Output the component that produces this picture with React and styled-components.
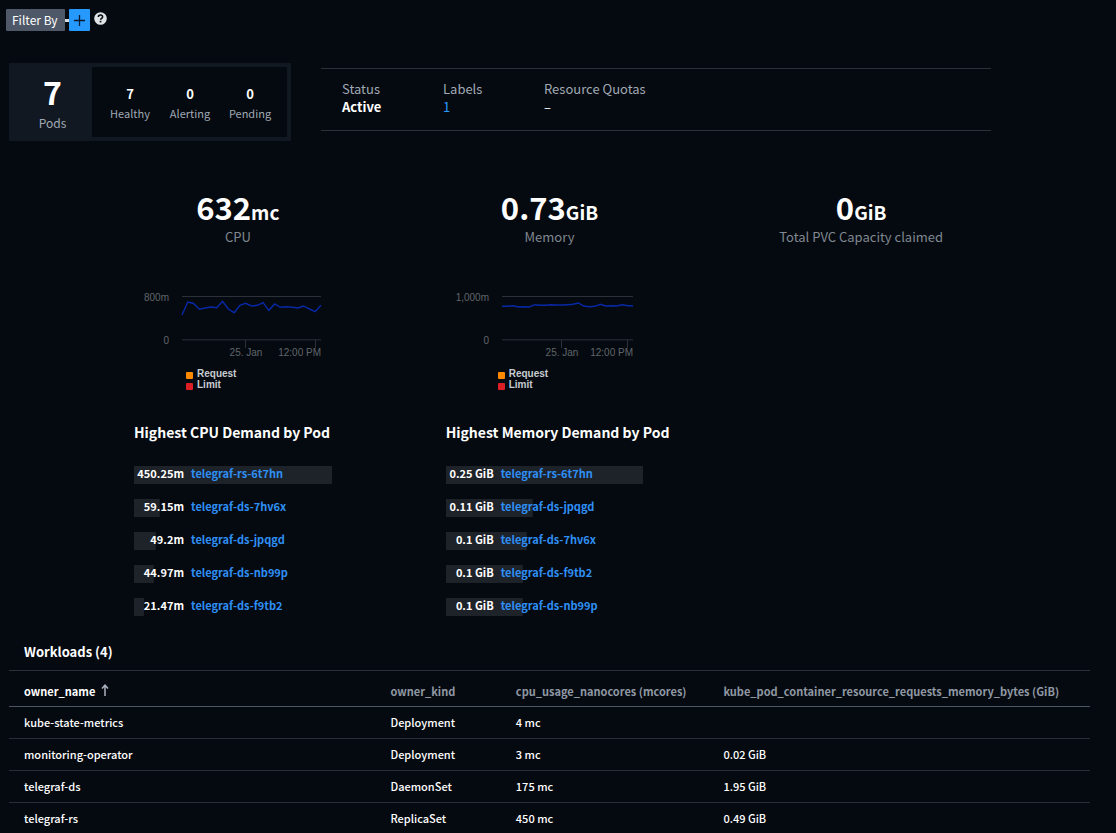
import React from "react";
import styled, { createGlobalStyle } from "styled-components";

const Global = createGlobalStyle`
  * { box-sizing: border-box; }
  body {
    margin: 0;
    background: #050a10;
    color: #fff;
    font-family: "Noto Sans CJK JP", "Noto Sans", sans-serif;
    font-size: 12px;
    line-height: 20px;
  }
  a { text-decoration: none; }
`;

const Page = styled.main`
  padding: 9px 26px 0 9px;
`;

const FilterBar = styled.div`
  display: flex;
  align-items: center;
  height: 22px;
  margin-left: -3px;
`;

const FilterButton = styled.button`
  height: 22px;
  padding: 0 7px 1px 6px;
  border: 0;
  border-radius: 1px;
  background: #4f5868;
  color: #fff;
  font: inherit;
  line-height: 20px;
`;

const Connector = styled.span`
  width: 4px;
  height: 3px;
  background: #d5dbe1;
`;

const AddButton = styled.button`
  display: grid;
  place-items: center;
  width: 21px;
  height: 22px;
  padding: 0;
  border: 0;
  border-radius: 1px;
  background: #2699ff;
`;

const HelpButton = styled.button`
  display: grid;
  width: 13px;
  height: 16px;
  margin-left: 4px;
  padding: 0;
  border: 0;
  background: none;
`;

const Summary = styled.section`
  display: flex;
  align-items: flex-start;
  gap: 30px;
  margin-top: 32px;
`;

const PodCard = styled.div`
  display: flex;
  height: 78px;
  padding: 4px;
  background: #111821;
`;

const PodTotal = styled.div`
  width: 79px;
  padding-top: 4px;
  text-align: center;
`;

const TotalNumber = styled.div`
  margin-bottom: 2px;
  font-size: 32px;
  line-height: 40px;
  font-weight: 700;
`;

const Muted = styled.div`
  color: #a0a9b4;
  font-size: ${(p) => (p.$small ? 11 : 12)}px;
`;

const PodStates = styled.div`
  display: grid;
  grid-template-columns: repeat(3, 60px);
  width: 195px;
  padding: 18px 7px 0 8px;
  background: #050a10;
  text-align: center;
`;

const StateCount = styled.div`
  font-size: 13px;
  line-height: 18px;
  font-weight: 700;
`;

const Facts = styled.dl`
  display: flex;
  width: 62%;
  height: 63px;
  margin: 5px 0 0;
  padding: 11px 21px;
  border-top: 1px solid #2b3138;
  border-bottom: 1px solid #2b3138;
  font-size: 13px;
  line-height: 18px;
`;

const Fact = styled.div`
  min-width: 101px;
  dt { color: #a0a9b4; }
  dd { margin: 0; font-weight: ${(p) => (p.$strong ? 700 : 400)}; }
  a { color: #2699ff; }
`;

const Metrics = styled.section`
  display: grid;
  grid-template-columns: repeat(3, minmax(0, 1fr));
  margin-top: 46px;
  padding: 0 73px;
`;

const Headline = styled.div`
  text-align: center;
  color: #808890;
  font-size: 13px;
`;

const Amount = styled.div`
  color: #fff;
  font-size: 31px;
  line-height: 40px;
  font-weight: 700;
`;

const Unit = styled.span`
  font-size: 19px;
  line-height: 20px;
`;

const MetricBody = styled.div`
  padding: 38px 62px 0 52px;
`;

const ChartSvg = styled.svg`
  display: block;
  overflow: visible;
  font: 10px "Liberation Sans", sans-serif;
`;

const Legend = styled.ul`
  margin: 7px 0 0 52px;
  padding: 0;
  list-style: none;
  color: #c8ccd0;
  font: 700 10px/11px "Liberation Sans", sans-serif;
`;

const LegendItem = styled.li`
  display: flex;
  align-items: flex-end;
  gap: 4px;
  &::before {
    content: "";
    width: 7px;
    height: 7px;
    border-radius: 1px;
    background: ${(p) => p.$color};
  }
`;

const ListTitle = styled.h2`
  margin: 32px 0 24px;
  font-size: 14px;
  line-height: 20px;
  font-weight: 700;
  white-space: nowrap;
`;

const PodList = styled.ul`
  display: grid;
  gap: 15px;
  margin: 0;
  padding: 0;
  list-style: none;
`;

const PodRow = styled.li`
  display: flex;
  gap: 7px;
  height: 18px;
  font-size: 11px;
  line-height: 15px;
  font-weight: 700;
  white-space: nowrap;
  background: linear-gradient(#1e2329, #1e2329) no-repeat 0 0 / ${(p) => p.$share}% 100%;
  a { color: #2f8ff5; }
`;

const PodValue = styled.span`
  width: ${(p) => p.$width}px;
  text-align: right;
`;

const TableTitle = styled.h2`
  margin: 26px 15px 8px;
  font-size: 13px;
  line-height: 20px;
  font-weight: 700;
`;

const Table = styled.table`
  width: 100%;
  border-top: 1px solid #2b3138;
  border-collapse: separate;
  border-spacing: 0;
  table-layout: fixed;
`;

const Th = styled.th`
  height: 36px;
  width: ${(p) => p.$width};
  padding: 5px 0 0 15px;
  border-bottom: 1px solid #4b5563;
  color: ${(p) => (p.$sorted ? "#fff" : "#8f98a3")};
  font-size: 11px;
  font-weight: 700;
  text-align: left;
  white-space: nowrap;
  svg { margin-left: 6px; }
`;

const Td = styled.td`
  height: 32px;
  padding: 0 0 2px 15px;
  border-bottom: 1px solid #272d37;
  font-size: 11px;
  font-weight: 500;
`;

const states = [
  ["7", "Healthy"],
  ["0", "Alerting"],
  ["0", "Pending"],
];

const cpu = {
  max: "800m",
  left: 48,
  ticks: [111, 181],
  points: [30, 17, 18.5, 24.3, 23, 22, 22.7, 16.3, 24, 27.7, 20.3, 18.3, 21, 20.3, 17.7, 25.3, 19, 22.3, 21.7, 22.3, 23, 21, 24, 26.7, 20.3],
  title: "Highest CPU Demand by Pod",
  valueWidth: 50,
  pods: [
    ["450.25m", "telegraf-rs-6t7hn", 100],
    ["59.15m", "telegraf-ds-7hv6x", 13],
    ["49.2m", "telegraf-ds-jpqgd", 11],
    ["44.97m", "telegraf-ds-nb99p", 10],
    ["21.47m", "telegraf-ds-f9tb2", 5],
  ],
};

const memory = {
  max: "1,000m",
  left: 56,
  ticks: [115, 181],
  points: [21.3, 21.3, 20.7, 22, 21.7, 22, 19.7, 20.3, 20.3, 19.7, 20, 20, 19.7, 19.3, 18, 21, 21.7, 21.3, 19.3, 21, 20.7, 21, 19.7, 20.7, 20.7],
  title: "Highest Memory Demand by Pod",
  valueWidth: 48,
  pods: [
    ["0.25 GiB", "telegraf-rs-6t7hn", 100],
    ["0.11 GiB", "telegraf-ds-jpqgd", 44],
    ["0.1 GiB", "telegraf-ds-7hv6x", 41],
    ["0.1 GiB", "telegraf-ds-f9tb2", 39],
    ["0.1 GiB", "telegraf-ds-nb99p", 39],
  ],
};

const metrics = [
  { amount: "632", unit: "mc", label: "CPU", detail: cpu },
  { amount: "0.73", unit: "GiB", label: "Memory", detail: memory },
  { amount: "0", unit: "GiB", label: "Total PVC Capacity claimed" },
];

const workloads = [
  ["kube-state-metrics", "Deployment", "4 mc", ""],
  ["monitoring-operator", "Deployment", "3 mc", "0.02 GiB"],
  ["telegraf-ds", "DaemonSet", "175 mc", "1.95 GiB"],
  ["telegraf-rs", "ReplicaSet", "450 mc", "0.49 GiB"],
];

function Chart({ data }) {
  const right = 187;
  const step = (right - data.left) / (data.points.length - 1);
  const line = data.points.map((y, i) => `${data.left + i * step},${y}`).join(" ");
  return (
    <ChartSvg width="198" height="76" viewBox="0 0 198 76">
      <g stroke="#2b3039">
        <path d={`M${data.left} 11.5H${right}`} />
        <path d={`M${data.left} 54.8H${right}`} />
        {data.ticks.map((x) => (
          <path key={x} d={`M${x + 0.5} 55V63`} />
        ))}
      </g>
      <polyline points={line} fill="none" stroke="#0728a8" strokeWidth="1.4" />
      <g fill="#60656a">
        <text x={data.left - 13} y="16" textAnchor="end">{data.max}</text>
        <text x={data.left - 13} y="59" textAnchor="end">0</text>
        <text x={data.ticks[0] + 1} y="71" textAnchor="middle">25. Jan</text>
        <text x={right} y="71" textAnchor="end">12:00 PM</text>
      </g>
    </ChartSvg>
  );
}

function MetricDetail({ data }) {
  return (
    <MetricBody>
      <Chart data={data} />
      <Legend>
        <LegendItem $color="#ff8a00">Request</LegendItem>
        <LegendItem $color="#dc1f24">Limit</LegendItem>
      </Legend>
      <ListTitle>{data.title}</ListTitle>
      <PodList>
        {data.pods.map(([value, name, share]) => (
          <PodRow key={name} $share={share}>
            <PodValue $width={data.valueWidth}>{value}</PodValue>
            <a href="#pod">{name}</a>
          </PodRow>
        ))}
      </PodList>
    </MetricBody>
  );
}

export default function App() {
  return (
    <Page>
      <Global />
      <FilterBar>
        <FilterButton type="button">Filter By</FilterButton>
        <Connector />
        <AddButton type="button" aria-label="Add filter">
          <svg width="11" height="11" viewBox="0 0 11 11">
            <path d="M5.5 0V11M0 5.5H11" stroke="#0b1a2c" strokeWidth="1.3" />
          </svg>
        </AddButton>
        <HelpButton type="button" aria-label="Help">
          <svg width="13" height="13" viewBox="0 0 13 13">
            <circle cx="6.5" cy="6.5" r="6.3" fill="#dfe3e6" />
            <path d="M4.4 5C4.4 2.4 8.6 2.4 8.6 4.9C8.6 6.3 6.6 6.3 6.6 7.8" fill="none" stroke="#050a10" strokeWidth="1.6" />
            <path d="M5.7 8.8H7.4V10.4H5.7Z" fill="#050a10" />
          </svg>
        </HelpButton>
      </FilterBar>

      <Summary>
        <PodCard>
          <PodTotal>
            <TotalNumber>7</TotalNumber>
            <Muted>Pods</Muted>
          </PodTotal>
          <PodStates>
            {states.map(([count, label]) => (
              <div key={label}>
                <StateCount>{count}</StateCount>
                <Muted $small>{label}</Muted>
              </div>
            ))}
          </PodStates>
        </PodCard>
        <Facts>
          <Fact $strong><dt>Status</dt><dd>Active</dd></Fact>
          <Fact><dt>Labels</dt><dd><a href="#labels">1</a></dd></Fact>
          <Fact><dt>Resource Quotas</dt><dd>–</dd></Fact>
        </Facts>
      </Summary>

      <Metrics>
        {metrics.map((m) => (
          <div key={m.label}>
            <Headline>
              <Amount>{m.amount}<Unit>{m.unit}</Unit></Amount>
              {m.label}
            </Headline>
            {m.detail && <MetricDetail data={m.detail} />}
          </div>
        ))}
      </Metrics>

      <TableTitle>Workloads (4)</TableTitle>
      <Table>
        <thead>
          <tr>
            <Th $width="33.9%" $sorted>
              owner_name
              <svg width="8" height="12" viewBox="0 0 8 12">
                <path d="M4 12V1.5M1 4.5L4 1.2L7 4.5" fill="none" stroke="#aab3bd" strokeWidth="1.5" />
              </svg>
            </Th>
            <Th $width="11.6%">owner_kind</Th>
            <Th $width="19.2%">cpu_usage_nanocores (mcores)</Th>
            <Th>kube_pod_container_resource_requests_memory_bytes (GiB)</Th>
          </tr>
        </thead>
        <tbody>
          {workloads.map((row) => (
            <tr key={row[0]}>
              {row.map((cell, i) => (
                <Td key={i}>{cell}</Td>
              ))}
            </tr>
          ))}
        </tbody>
      </Table>
    </Page>
  );
}
